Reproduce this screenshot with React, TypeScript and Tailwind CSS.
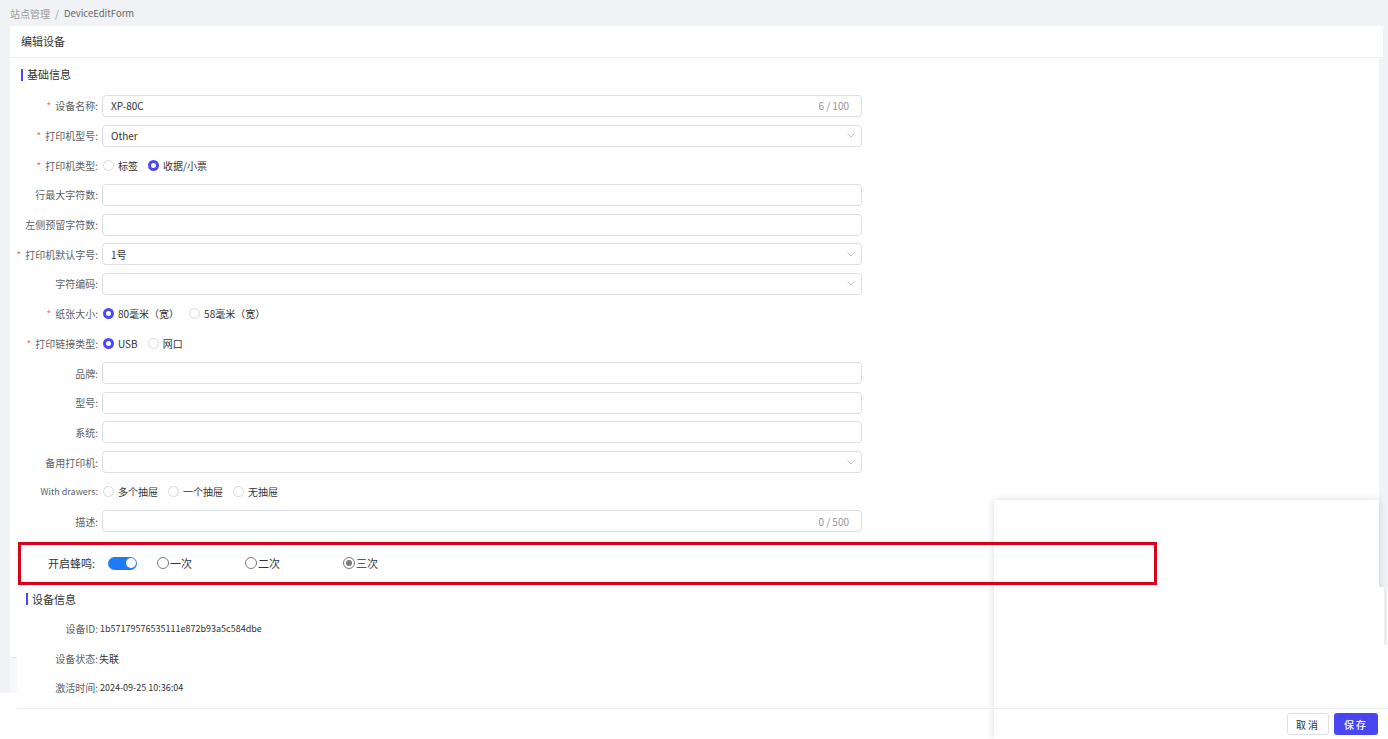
import React from "react";

const Chevron = () => (
  <svg width="8" height="5" viewBox="0 0 8 5" fill="none">
    <polyline points="0.5,0.5 4,4 7.5,0.5" stroke="#c0c4cc" strokeWidth="1" />
  </svg>
);

const AntRadio = ({ checked, label }: { checked?: boolean; label: string }) => (
  <div className="flex items-center">
    <span
      className={
        checked
          ? "w-[11px] h-[11px] rounded-full border-[3.5px] border-[#4b48f5] bg-white box-border"
          : "w-[11px] h-[11px] rounded-full border border-[#d9d9d9] bg-white box-border"
      }
    />
    <span className="ml-[4px] text-[10px] text-[#333]">{label}</span>
  </div>
);

const Label = ({ text, req, small }: { text: string; req?: boolean; small?: boolean }) => (
  <div
    className={
      small
        ? "w-[88px] shrink-0 text-right text-[9px] text-[#606266] whitespace-nowrap"
        : "w-[88px] shrink-0 text-right text-[10px] text-[#606266] whitespace-nowrap"
    }
  >
    {req && <span className="text-[#f56c6c] mr-[4px]">*</span>}
    {text}
  </div>
);

const Row = ({ children }: { children: React.ReactNode }) => (
  <div className="h-[29.7px] flex items-center">{children}</div>
);

const Input = ({ value, counter, select }: { value?: string; counter?: string; select?: boolean }) => (
  <div className="ml-[4px] w-[760px] h-[22px] box-border border border-[#dcdfe6] rounded-[4px] pl-[8px] flex items-center justify-between bg-white">
    <span className="text-[10px] text-[#333]">{value ?? ""}</span>
    {counter && <span className="text-[10px] text-[#909399] pr-[12px]">{counter}</span>}
    {select && (
      <span className="pr-[6px] flex items-center">
        <Chevron />
      </span>
    )}
  </div>
);

const Radios = ({ items, sel }: { items: string[]; sel: number }) => (
  <div className="ml-[5px] flex items-center gap-[10px]">
    {items.map((t, i) => (
      <AntRadio key={t} label={t} checked={i === sel} />
    ))}
  </div>
);

const NativeRadio = ({ checked, label }: { checked?: boolean; label: string }) => (
  <div className="flex items-center">
    <span className="w-[12px] h-[12px] rounded-full border border-[#7a7a7a] bg-white box-border flex items-center justify-center">
      {checked && <span className="w-[6px] h-[6px] rounded-full bg-[#7a7a7a]" />}
    </span>
    <span className="ml-[1px] text-[11px] text-[#333]">{label}</span>
  </div>
);

export default function App() {
  return (
    <div className="relative w-[1388px] h-[739px] overflow-hidden bg-[#f0f2f5] font-['Noto_Sans_CJK_SC','Noto_Sans',sans-serif]">
      {/* breadcrumb */}
      <div className="h-[26px] flex items-center pl-[10px] text-[10px]">
        <span className="text-[#9a9a9a]">站点管理</span>
        <span className="text-[#9a9a9a] mx-[5px]">/</span>
        <span className="text-[#666] text-[9.5px]">DeviceEditForm</span>
      </div>
      {/* header */}
      <div className="ml-[10px] w-[1373px] h-[32px] box-border bg-white border-b border-[#f0f0f0] flex items-center pl-[11px] text-[11px] text-[#333]">
        编辑设备
      </div>
      {/* body */}
      <div className="flex h-[635px]">
        <div className="w-[10px] shrink-0" />
        <div className="w-[1369px] bg-white">
          <div className="h-[33px] flex items-center pl-[11px]">
            <span className="w-[2px] h-[12px] bg-[#4b48f5] mr-[4px]" />
            <span className="text-[11px] text-[#303133]">基础信息</span>
          </div>
          <Row>
            <Label text="设备名称:" req />
            <Input value="XP-80C" counter="6 / 100" />
          </Row>
          <Row>
            <Label text="打印机型号:" req />
            <Input value="Other" select />
          </Row>
          <Row>
            <Label text="打印机类型:" req />
            <Radios items={["标签", "收据/小票"]} sel={1} />
          </Row>
          <Row>
            <Label text="行最大字符数:" />
            <Input />
          </Row>
          <Row>
            <Label text="左侧预留字符数:" />
            <Input />
          </Row>
          <Row>
            <Label text="打印机默认字号:" req />
            <Input value="1号" select />
          </Row>
          <Row>
            <Label text="字符编码:" />
            <Input select />
          </Row>
          <Row>
            <Label text="纸张大小:" req />
            <Radios items={["80毫米（宽）", "58毫米（宽）"]} sel={0} />
          </Row>
          <Row>
            <Label text="打印链接类型:" req />
            <Radios items={["USB", "网口"]} sel={0} />
          </Row>
          <Row>
            <Label text="品牌:" />
            <Input />
          </Row>
          <Row>
            <Label text="型号:" />
            <Input />
          </Row>
          <Row>
            <Label text="系统:" />
            <Input />
          </Row>
          <Row>
            <Label text="备用打印机:" />
            <Input select />
          </Row>
          <Row>
            <Label text="With drawers:" small />
            <Radios items={["多个抽屉", "一个抽屉", "无抽屉"]} sel={-1} />
          </Row>
          <Row>
            <Label text="描述:" />
            <Input counter="0 / 500" />
          </Row>

          {/* beep row highlighted */}
          <div className="relative z-[2] mt-[5.5px] ml-[8px] w-[1139px] h-[43px] box-border border-[3px] border-[#d9001b] flex items-center">
            <div className="w-[74px] text-right text-[11px] text-[#333]">开启蜂鸣:</div>
            <div className="ml-[13px] w-[29px] h-[13px] rounded-full bg-[#1f7bf5] relative">
              <span className="absolute right-[1.5px] top-[1.5px] w-[10px] h-[10px] rounded-full bg-white" />
            </div>
            <div className="ml-[20px]">
              <NativeRadio label="一次" />
            </div>
            <div className="ml-[53px]">
              <NativeRadio label="二次" />
            </div>
            <div className="ml-[63px]">
              <NativeRadio label="三次" checked />
            </div>
          </div>

          <div className="h-[29px] flex items-center pl-[16px]">
            <span className="w-[2px] h-[12px] bg-[#4b48f5] mr-[4px]" />
            <span className="text-[11px] text-[#303133]">设备信息</span>
          </div>
          <div className="h-[29.5px] flex items-center">
            <Label text="设备ID:" />
            <span className="ml-[2px] text-[9px] text-[#303133]">1b57179576535111e872b93a5c584dbe</span>
          </div>
          <div className="h-[29.5px] flex items-center">
            <Label text="设备状态:" />
            <span className="ml-[1px] text-[10px] text-[#303133]">失联</span>
          </div>
          <div className="h-[29.5px] flex items-center">
            <Label text="激活时间:" />
            <span className="ml-[2px] text-[9px] text-[#303133]">2024-09-25 10:36:04</span>
          </div>
        </div>
      </div>
      {/* footer */}
      <div className="h-[46px] bg-white pt-[15px]">
        <div className="relative z-[2] ml-[17px] border-t border-[#ebeef5] flex justify-end gap-[5px] pt-[4px] pr-[10px]">
          <button className="w-[42px] h-[22px] box-border border border-[#dcdfe6] rounded-[3px] bg-white text-[10px] text-[#333] tracking-[2px]">
            取消
          </button>
          <button className="w-[44px] h-[22px] rounded-[3px] bg-[#4946f0] text-[10px] text-white tracking-[2px] font-medium">
            保存
          </button>
        </div>
      </div>

      {/* floating panel */}
      <div className="absolute left-[994px] top-[500px] w-[385px] h-[239px] bg-white shadow-[0_0_8px_rgba(0,0,0,0.14)] z-[1]" />
      {/* right scroll remnant */}
      <div className="absolute left-[1379px] top-[587px] w-[9px] h-[152px] bg-white z-[1]">
        <div className="absolute left-[5px] top-0 w-[3px] h-[58px] bg-[#ededed] rounded-b-[2px]" />
      </div>
      {/* left bottom remnant */}
      <div className="absolute left-[10px] top-[657px] w-[7px] h-[36px] bg-[#f7f8fa] border-t border-[#e4e6ea]" />
    </div>
  );
}
